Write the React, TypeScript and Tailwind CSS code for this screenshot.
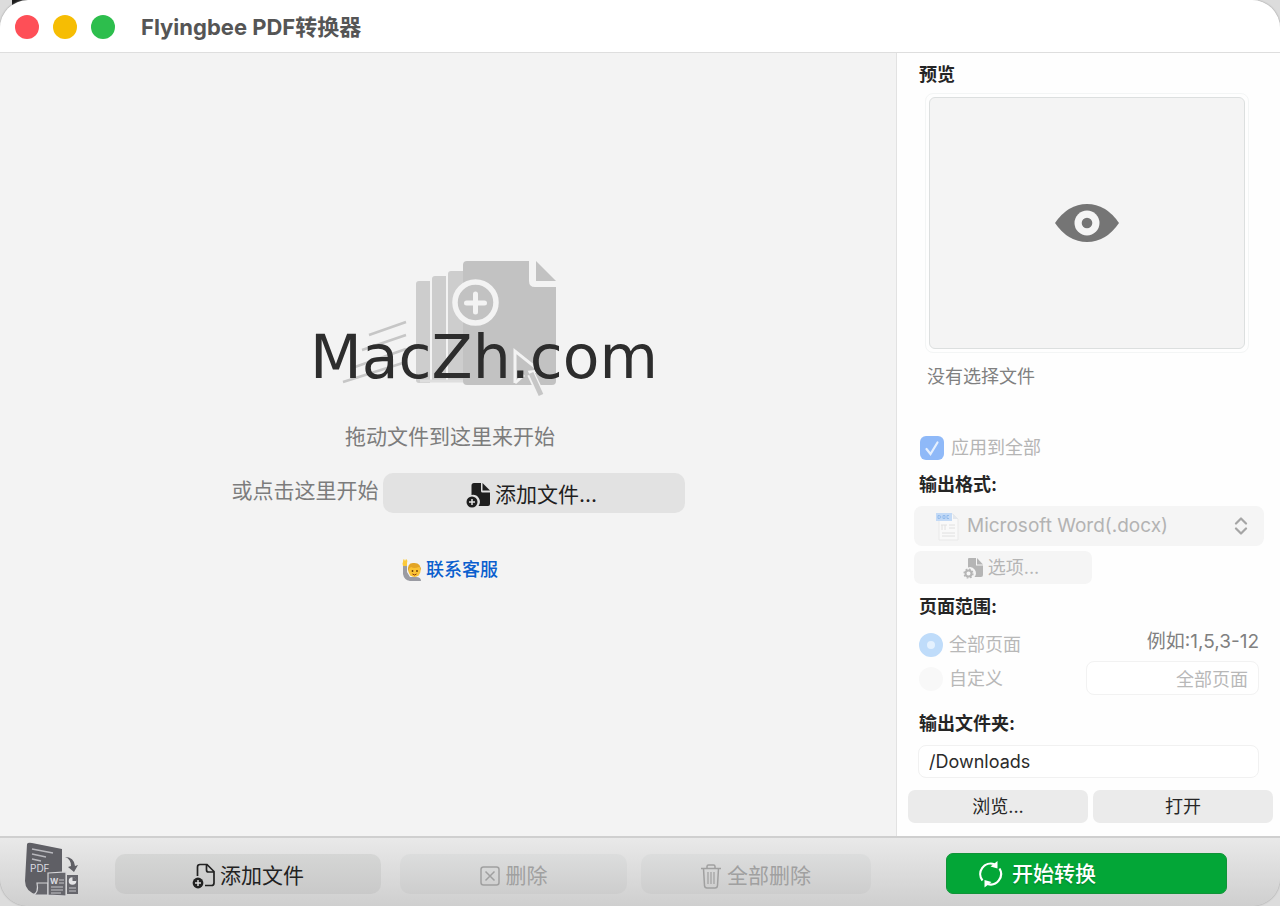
import type { ReactNode } from 'react';

interface IconProps {
  className?: string;
}

function DropIllustration() {
  return (
    <svg aria-hidden viewBox="0 0 216 138" className="h-[138px] w-[216px]">
      <g stroke="#c6c6c6" strokeWidth="2.5">
        <path d="M29 76 66 63M22 91l44-15M12 109l54-19M3 123l63-20" />
      </g>
      <g fill="#cdcdcd">
        <path d="M76 25q0-3 3-3h11v102H79q-3 0-3-3z" />
        <path d="M92 20q0-3 3-3h11v104H92z" />
        <path d="M108 15q0-3 3-3h12v109h-15z" />
      </g>
      <path d="M80 122h44" stroke="#dedede" strokeWidth="3" />
      <path
        d="M127 2h62v20q0 6 6 6h21v94q0 4-4 4h-85q-4 0-4-4V6q0-4 4-4z"
        fill="#c2c2c2"
      />
      <path d="M196 2v20h20z" fill="#c2c2c2" />
      <circle cx="135.500" cy="43.500" r="20.500" fill="#c2c2c2" stroke="#f3f3f3" strokeWidth="5.500" />
      <path d="M135.500 35v18M126.500 44h18" stroke="#f3f3f3" strokeWidth="5" strokeLinecap="round" />
      <path d="M176 93v31l8-6 26 4-8-9z" fill="#c2c2c2" />
      <path d="M191 115l10 21" stroke="#f3f3f3" strokeWidth="8" />
      <path d="M175 124V92l25 20-10 1 10 22" fill="none" stroke="#f3f3f3" strokeWidth="3" />
      <path d="M191 114l10 22" stroke="#c6c6c6" strokeWidth="5" />
      <path d="M175 124l9-8" stroke="#f3f3f3" strokeWidth="3" />
    </svg>
  );
}

function FileAddSolid({ className }: IconProps) {
  return (
    <svg aria-hidden viewBox="0 0 25 26" className={className}>
      <path d="M8 1h7v8q0 1.500 1.500 1.500H24V22q0 2-2 2H12.500A7 7 0 0 0 5.500 13V3.500Q5.500 1 8 1z" fill="currentColor" />
      <path d="M16.500 1 24 8.500h-7.500z" fill="currentColor" />
      <circle cx="6" cy="20" r="5.500" fill="currentColor" />
      <path d="M6 17v6M3 20h6" stroke="#e2e2e2" strokeWidth="1.500" />
    </svg>
  );
}

function FileGear({ className }: IconProps) {
  return (
    <svg aria-hidden viewBox="0 0 21 22" className={className}>
      <path d="M6 1h7v7.500h7V18q0 2-2 2h-6.500A6 6 0 0 0 5 10.500V2q0-1 1-1z" fill="currentColor" />
      <path d="M14 1l6 6.500h-6z" fill="currentColor" />
      <circle cx="5.500" cy="16.500" r="3" fill="none" stroke="currentColor" strokeWidth="2" />
      <circle cx="5.500" cy="16.500" r="4.400" fill="none" stroke="currentColor" strokeWidth="1.400" strokeDasharray="1.700 1.750" />
    </svg>
  );
}

function FileAddOutline({ className }: IconProps) {
  return (
    <svg aria-hidden viewBox="0 0 24 26" className={className}>
      <path
        d="M5.500 13V4q0-2.500 2.500-2.500h7l7 7V20q0 2.500-2.500 2.500H13M14.500 2v5q0 2 2 2H22"
        fill="none"
        stroke="currentColor"
        strokeWidth="1.700"
      />
      <circle cx="6" cy="20" r="5.400" fill="currentColor" />
      <path d="M6 17v6M3 20h6" stroke="#d9d9d9" strokeWidth="1.500" />
    </svg>
  );
}

function BoxX({ className }: IconProps) {
  return (
    <svg aria-hidden viewBox="0 0 20 20" fill="none" stroke="currentColor" strokeWidth="1.500" className={className}>
      <rect x="1" y="1" width="18" height="18" rx="2.500" />
      <path d="M5.500 5.500l9 9M14.500 5.500l-9 9" />
    </svg>
  );
}

function TrashCan({ className }: IconProps) {
  return (
    <svg aria-hidden viewBox="0 0 20 25" fill="none" stroke="currentColor" strokeWidth="1.500" className={className}>
      <path d="M0 4.500h20M2.500 4.500l1 17Q3.700 24 6 24h8q2.300 0 2.500-2.500l1-17M6 4.500v-2Q6 1 7.500 1h5Q14 1 14 2.500v2" />
      <path d="M7 8v12M10 8v12M13 8v12" strokeWidth="1.200" />
    </svg>
  );
}

function ConvertArrows({ className }: IconProps) {
  return (
    <svg aria-hidden viewBox="0 0 24 28" fill="none" stroke="currentColor" strokeWidth="2.200" className={className}>
      <path d="M3.500 20.500A10.500 10.500 0 0 1 15.500 4.200M20.500 8.500A10.500 10.500 0 0 1 8.500 24" />
      <path d="M11.500 6.500 18.500 1v7.500z" fill="currentColor" stroke="none" />
      <path d="M12.500 22 5.500 27.500V20z" fill="currentColor" stroke="none" />
    </svg>
  );
}

function Eye({ className }: IconProps) {
  return (
    <svg aria-hidden viewBox="0 0 64 38" className={className}>
      <path d="M0 19Q13 0 32 0t32 19Q51 38 32 38T0 19z" fill="#757575" />
      <circle cx="32" cy="19" r="12.500" fill="#f5f5f5" />
      <circle cx="32" cy="19" r="5.300" fill="#757575" />
    </svg>
  );
}

function RaisedHand({ className }: IconProps) {
  return (
    <svg aria-hidden viewBox="0 0 20 24" className={className}>
      <path d="M1 7v9q1 6 7 7h11q0-4-5-4H8l-3-5V7z" fill="#9a9ba2" />
      <path d="M1 8Q0 5 1 4q0-3 1-3l1 2 1-2q2 1 1 4v3z" fill="#fbc93a" />
      <circle cx="12.500" cy="13" r="6" fill="#fbc334" />
      <path d="M6 14Q5 5 11 5q8-1 8 8l-2-4q-5 2-8 0-2 1-3 5z" fill="#e3a526" />
      <circle cx="10.500" cy="13" r="0.900" fill="#6b3c08" />
      <circle cx="15" cy="13" r="0.900" fill="#6b3c08" />
      <path d="M10.500 16q2 2 4 0" stroke="#8a3b12" fill="none" />
    </svg>
  );
}

function DocxIcon({ className }: IconProps) {
  return (
    <svg aria-hidden viewBox="0 0 24 30" className={className}>
      <path d="M3 2h14l5 5v21H3z" fill="#f9f9f9" stroke="#e9e9e9" />
      <path d="M17 2v5h5z" fill="#e3e7ec" />
      <rect x="0" y="1" width="16" height="8" fill="#c3daf6" />
      <path d="M2 3.500v3q3 0 3-1.500T2 3.500zM7 3.500h2v3H7zM13 3.500h-2v3h2" fill="none" stroke="#93bbec" />
      <path d="M5 13h6M6 13v5M9 13v5M13 13h6M13 16h6M6 21h13M6 24h13" stroke="#e0e0e0" />
    </svg>
  );
}

function AppLogo({ className }: IconProps) {
  return (
    <svg aria-hidden viewBox="0 0 56 56" className={className}>
      <path d="M3 2Q4 0 8 1l30 6v24H24v22H13Q1 49 1 39z" fill="#5f5f65" />
      <path d="M8 7l21 4M8 12l14 3M8 17l9 2" stroke="#b9b9be" strokeWidth="1.300" />
      <text x="6" y="30" fontSize="10" fill="#dcdce0" fontFamily="Inter, sans-serif">PDF</text>
      <path d="M13 41h11v12H9q6-2 4-12z" fill="#66666c" stroke="#d5d5d8" strokeWidth="1.200" />
      <path d="M24 31l18-1v24l-18-1z" fill="#66666c" stroke="#d5d5d8" strokeWidth="1.200" />
      <text x="26" y="42" fontSize="8" fontWeight="700" fill="#dcdce0" fontFamily="Inter, sans-serif">W</text>
      <path d="M35 38h5M35 41h5M27 45h12M27 48h12M27 51h10" stroke="#c4c4c8" />
      <path d="M43 33h11v19H43z" fill="#66666c" />
      <circle cx="48.500" cy="39" r="3.800" fill="#e4e4e6" />
      <path d="M48.500 39v-4a4 4 0 0 1 4 4z" fill="#66666c" />
      <path d="M45 46h7M45 49h7" stroke="#c4c4c8" />
      <path d="M41 15q9 0 10 9l3-1-4 7-6-5 3-1q0-7-6-9z" fill="#5f5f65" />
    </svg>
  );
}

function SectionTitle({ children, className = '' }: { children: ReactNode; className?: string }) {
  return <h2 className={`px-[22px] text-lg leading-7 font-bold text-[#252525] ${className}`}>{children}</h2>;
}

function TitleBar() {
  return (
    <header className="flex h-[53px] items-center border-b border-[#dedede] bg-white pt-[2px] pl-[15px]">
      <div className="flex gap-[14px]">
        <button aria-label="关闭" className="h-6 w-6 rounded-full bg-[#fe4f57]" />
        <button aria-label="最小化" className="h-6 w-6 rounded-full bg-[#f6bd03]" />
        <button aria-label="缩放" className="h-6 w-6 rounded-full bg-[#2dbe4d]" />
      </div>
      <h1 className="ml-[26px] text-[22px] leading-8 font-bold text-[#555555]">Flyingbee PDF转换器</h1>
    </header>
  );
}

function DropZone() {
  return (
    <main className="flex flex-1 flex-col items-center justify-center bg-[#f3f3f3] pb-[47px]">
      <div className="relative">
        <DropIllustration />
        <span className="absolute top-[68px] -left-[30px] font-['DejaVu_Sans',sans-serif] text-[60px] leading-none text-[#2d2d2d]">
          MacZh.com
        </span>
      </div>
      <p className="mt-6 pl-1 text-[21px] leading-8 text-[#7c7c7c]">拖动文件到这里来开始</p>
      <div className="mt-5 flex items-start gap-1 pl-5">
        <span className="text-[21px] leading-9 text-[#7c7c7c]">或点击这里开始</span>
        <button className="flex h-10 w-[302px] items-center justify-center gap-1 rounded-[10px] bg-[#e2e2e2] pt-1 pr-1 text-[21px] text-[#1f1f1f]">
          <FileAddSolid className="h-[26px] w-[25px]" />
          添加文件...
        </button>
      </div>
      <a href="#support" className="mt-[43px] flex items-center gap-1 pl-1 text-lg leading-7 font-medium text-[#0a5fce]">
        <RaisedHand className="h-6 w-5" />
        联系客服
      </a>
    </main>
  );
}

function Sidebar() {
  return (
    <aside className="flex w-[384px] shrink-0 flex-col border-l border-[#e2e2e2] bg-[#fefefe] pt-2 pb-[13px] text-lg">
      <SectionTitle>预览</SectionTitle>
      <div className="mt-1 mr-[31px] ml-7 rounded-lg border border-[#f3f5f5] p-[3px]">
        <div className="flex h-[252px] items-center justify-center rounded-md border border-[#dcdfdf] bg-[#f4f4f4]">
          <Eye className="h-[38px] w-16" />
        </div>
      </div>
      <p className="mt-[10px] px-[30px] leading-7 text-[#808080]">没有选择文件</p>

      <label className="mt-[43px] flex items-center gap-[7px] px-[23px] leading-7 text-[#b5b5b5]">
        <span className="grid h-6 w-6">
          <input
            type="checkbox"
            defaultChecked
            disabled
            className="col-start-1 row-start-1 h-6 w-6 appearance-none rounded-[6px] bg-[#8fb9f8]"
          />
          <svg
            aria-hidden
            viewBox="0 0 24 24"
            className="col-start-1 row-start-1 h-6 w-6"
            fill="none"
            stroke="#e6f0fe"
            strokeWidth="2.200"
            strokeLinecap="round"
          >
            <path d="M6.500 13l4 5L17.500 6.500" />
          </svg>
        </span>
        应用到全部
      </label>

      <SectionTitle className="mt-[9px]">输出格式:</SectionTitle>
      <div className="relative mt-[7px] mr-4 ml-[17px]">
        <select
          aria-label="输出格式"
          disabled
          className="h-10 w-full appearance-none rounded-lg bg-[#f5f5f5] pr-10 pl-[53px] text-[19px] text-[#b3b3b3] opacity-100"
        >
          <option>Microsoft Word(.docx)</option>
        </select>
        <DocxIcon className="absolute top-[6px] left-[22px] h-[30px] w-6" />
        <svg
          aria-hidden
          viewBox="0 0 14 18"
          className="absolute top-[11px] right-4 h-[18px] w-[14px]"
          fill="none"
          stroke="#a5a5a5"
          strokeWidth="2.200"
          strokeLinecap="round"
          strokeLinejoin="round"
        >
          <path d="M2 6.500l5-5 5 5M2 11.500l5 5 5-5" />
        </svg>
      </div>
      <button
        disabled
        className="mt-[5px] ml-[17px] flex h-[33px] w-[178px] items-center justify-center gap-1 rounded-[7px] bg-[#f5f5f5] pr-1 text-[#b5b5b5]"
      >
        <FileGear className="h-[22px] w-[21px]" />
        选项...
      </button>

      <SectionTitle className="mt-[9px]">页面范围:</SectionTitle>
      <div className="mt-[7px] flex justify-between pr-[21px] pl-[22px]">
        <div className="flex flex-col gap-[6px] pt-[3px] leading-7 text-[#b8b8b8]">
          <label className="flex items-center gap-[6px]">
            <input
              type="radio"
              name="range"
              defaultChecked
              disabled
              className="h-6 w-6 appearance-none rounded-full border-[8px] border-[#bfdcfa] bg-[#e4f1fe]"
            />
            全部页面
          </label>
          <label className="flex items-center gap-[6px]">
            <input type="radio" name="range" disabled className="h-6 w-6 appearance-none rounded-full bg-[#f8f8f8]" />
            自定义
          </label>
        </div>
        <div className="flex flex-col items-end gap-[5px]">
          <label htmlFor="pages" className="text-[19px] leading-7 text-[#808080]">
            例如:1,5,3-12
          </label>
          <input
            id="pages"
            disabled
            defaultValue="全部页面"
            className="h-[34px] w-[173px] rounded-lg border border-[#f2f2f2] bg-white px-[10px] text-right text-[#b8b8b8]"
          />
        </div>
      </div>

      <SectionTitle className="mt-[15px]">输出文件夹:</SectionTitle>
      <input
        aria-label="输出文件夹"
        defaultValue="/Downloads"
        className="mx-[21px] mt-[7px] h-[33px] rounded-lg border border-[#f1f1f1] bg-white px-[10px] text-[#2b2b2b]"
      />
      <div className="mt-3 flex gap-[5px] pr-[7px] pl-[11px] text-[#262626]">
        <button className="h-[33px] flex-1 rounded-[7px] bg-[#ebebeb]">浏览...</button>
        <button className="h-[33px] flex-1 rounded-[7px] bg-[#ebebeb]">打开</button>
      </div>
    </aside>
  );
}

function Toolbar() {
  return (
    <footer className="flex h-[70px] items-center border-t-2 border-[#cfcfcf] bg-linear-to-b from-[#e9e9e9] to-[#cfcfcf] text-[21px]">
      <div className="flex flex-1 items-center pt-1 pr-[25px] pl-6">
        <AppLogo className="mr-[35px] mb-2 h-14 w-14 shrink-0" />
        <button className="mr-[19px] flex h-10 flex-[266] items-center justify-center gap-1 rounded-[10px] bg-linear-to-b from-[#d5d6d5] to-[#c9c9c9] pt-1 text-[#222222]">
          <FileAddOutline className="h-[26px] w-6" />
          添加文件
        </button>
        <button
          disabled
          className="mr-[14px] flex h-10 flex-[227] items-center justify-center gap-[6px] rounded-[10px] bg-linear-to-b from-[#dcdddd] to-[#cdcdcd] pt-1 text-[#a0a0a0]"
        >
          <BoxX className="h-5 w-5" />
          删除
        </button>
        <button
          disabled
          className="flex h-10 flex-[230] items-center justify-center gap-[6px] rounded-[10px] bg-linear-to-b from-[#dcdddd] to-[#cdcdcd] pt-1 text-[#a0a0a0]"
        >
          <TrashCan className="h-[25px] w-5" />
          全部删除
        </button>
      </div>
      <div className="w-[384px] shrink-0 pt-[2px] pr-[53px] pl-[50px]">
        <button className="flex h-[41px] w-full items-center gap-[9px] rounded-[7px] border border-[#109438] bg-[#03a637] pt-[2px] pl-[32px] font-medium text-white text-shadow-sm">
          <ConvertArrows className="h-7 w-6" />
          开始转换
        </button>
      </div>
    </footer>
  );
}

export default function App() {
  return (
    <div className="relative flex min-h-screen flex-col bg-[#dcdcdc] font-[Inter,'Noto_Sans_CJK_SC',sans-serif]">
      <div aria-hidden className="absolute top-0 left-3 h-2 w-10 bg-[#1c1c1c]" />
      <div className="relative flex flex-1 flex-col overflow-hidden rounded-[28px] shadow-[0_0_2px_#888]">
        <TitleBar />
        <div className="flex flex-1">
          <DropZone />
          <Sidebar />
        </div>
        <Toolbar />
      </div>
    </div>
  );
}
